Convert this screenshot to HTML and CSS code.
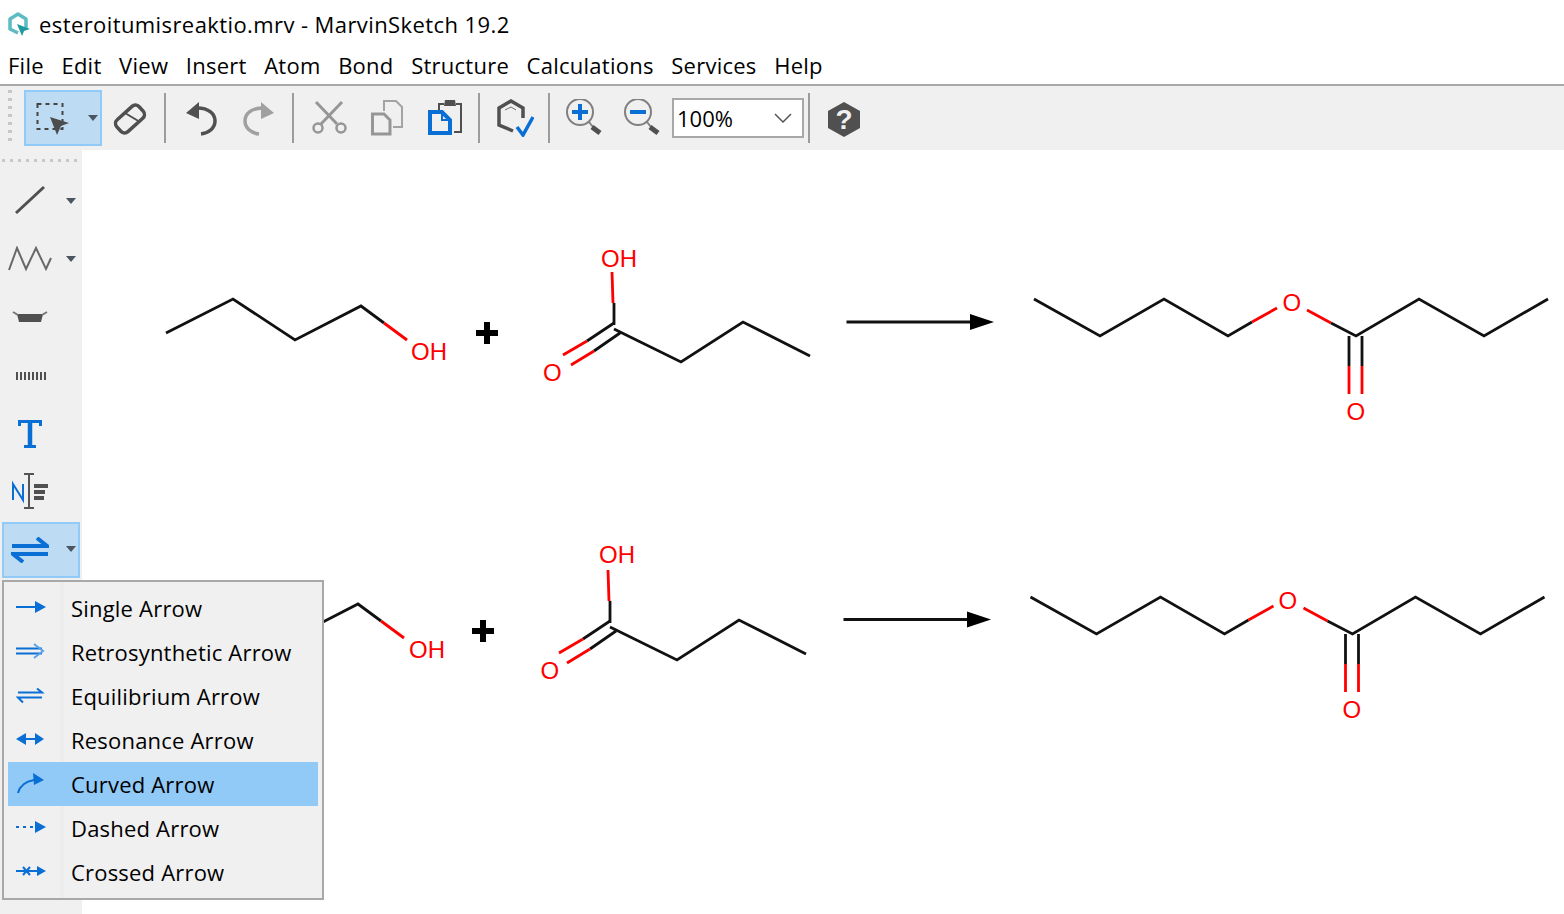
FILE: index.html
```html
<!DOCTYPE html>
<html lang="en">
<head>
<meta charset="utf-8">
<title>MarvinSketch</title>
<link rel="stylesheet" href="styles.css">
</head>
<body>
<div class="app">
  <header class="titlebar">
    <svg class="appicon" width="24" height="24" viewBox="0 0 24 24"><path d="M11 21L3 17V7l8-5 8 5v9" fill="none" stroke="#5dbcc1" stroke-width="3.500" stroke-linejoin="round"/><path d="M10 12l13 5-6 2-2 5z" fill="#1f9aa0"/></svg>
    <span class="titletext">esteroitumisreaktio.mrv - MarvinSketch 19.2</span>
  </header>
  <nav class="menubar">
    <span>File</span><span>Edit</span><span>View</span><span>Insert</span><span>Atom</span><span>Bond</span><span>Structure</span><span>Calculations</span><span>Services</span><span>Help</span>
  </nav>
  <div class="toolbar">
    <div class="grip-v"></div>
    <div class="tool-select">
      <svg width="36" height="38" viewBox="0 0 36 38"><rect x="2.500" y="5" width="25" height="25" fill="none" stroke="#444" stroke-width="2" stroke-dasharray="4 4"/><path d="M15 18l19 6-8 3-4 9z" fill="#4d4d4d"/></svg>
      <i class="caret"></i>
    </div>
    <div class="slot"><svg width="38" height="38" viewBox="0 0 38 38"><rect x="3" y="12" width="30" height="16" rx="5" transform="rotate(-42 18 20)" fill="none" stroke="#505050" stroke-width="3.500"/><path d="M13 14l15 9" stroke="#505050" stroke-width="2"/></svg></div>
    <i class="sep"></i>
    <div class="slot"><svg width="38" height="38" viewBox="0 0 38 38"><path d="M15 9C27 9 33 15 33 22 33 29 27 34 19 35" fill="none" stroke="#505050" stroke-width="3.500"/><path d="M4 14L17 3v17z" fill="#505050"/></svg></div>
    <div class="slot"><svg width="38" height="38" viewBox="0 0 38 38"><path d="M23 9C11 9 5 15 5 22 5 29 11 34 19 35" fill="none" stroke="#a0a0a0" stroke-width="3.500"/><path d="M34 14L21 3v17z" fill="#a0a0a0"/></svg></div>
    <i class="sep"></i>
    <div class="slot"><svg width="38" height="38" viewBox="0 0 38 38"><path d="M6 3l21 22M32 3L11 25" stroke="#969696" stroke-width="3" fill="none"/><circle cx="8" cy="29" r="4.500" fill="none" stroke="#969696" stroke-width="2.500"/><circle cx="31" cy="29" r="4.500" fill="none" stroke="#969696" stroke-width="2.500"/></svg></div>
    <div class="slot"><svg width="38" height="38" viewBox="0 0 38 38"><path d="M16 12V2h12l6 6v20h-9" fill="none" stroke="#a3a3a3" stroke-width="2"/><path d="M4.500 15H16l6 6v14H4.500z" fill="#f0f0f0" stroke="#969696" stroke-width="3"/></svg></div>
    <div class="slot"><svg width="38" height="38" viewBox="0 0 38 38"><path d="M13 12V5h5M30 5h5v28h-7" fill="none" stroke="#505050" stroke-width="2"/><path d="M19 1h10l1 6H18z" fill="#505050"/><path d="M4 13h12l8 8v13H4z" fill="#f0f0f0" stroke="#0a6fd4" stroke-width="4"/><path d="M16 13v8h8" fill="none" stroke="#0a6fd4" stroke-width="2"/></svg></div>
    <i class="sep"></i>
    <div class="slot"><svg width="38" height="38" viewBox="0 0 38 38"><path d="M17 32L3 26V9l12-7 12 7v10" fill="none" stroke="#505050" stroke-width="3.500"/><path d="M9 11l6-3 5 3" fill="none" stroke="#707070"/><path d="M21 28l6 8 10-18" fill="none" stroke="#0a6fd4" stroke-width="3.500"/></svg></div>
    <i class="sep tight"></i>
    <div class="slot"><svg width="38" height="38" viewBox="0 0 38 38"><circle cx="15" cy="13" r="13" fill="none" stroke="#808080" stroke-width="2"/><path d="M15 5v16M7 13h16" stroke="#0a6fd4" stroke-width="4"/><path d="M24 23l4 5" stroke="#808080" stroke-width="2"/><path d="M27 28l8 6" stroke="#505050" stroke-width="5"/></svg></div>
    <div class="slot"><svg width="38" height="38" viewBox="0 0 38 38"><circle cx="15" cy="13" r="13" fill="none" stroke="#808080" stroke-width="2"/><path d="M7 13h16" stroke="#0a6fd4" stroke-width="4"/><path d="M24 23l4 5" stroke="#808080" stroke-width="2"/><path d="M27 28l8 6" stroke="#505050" stroke-width="5"/></svg></div>
    <div class="zoombox"><span>100%</span><svg width="18" height="10" viewBox="0 0 18 10"><path d="M1 1l8 8 8-8" fill="none" stroke="#555" stroke-width="1.500"/></svg></div>
    <i class="sep tight"></i>
    <div class="slot"><svg width="38" height="38" viewBox="0 0 38 38"><path d="M19 3l16 9v17l-16 9-16-9V12z" fill="#505050"/><text x="19" y="30" class="helpq">?</text></svg></div>
  </div>
  <div class="main">
    <aside class="sidebar">
      <div class="grip-h"></div>
      <div class="side-tool"><svg width="32" height="32" viewBox="0 0 32 32"><path d="M2 28L30 2" stroke="#505050" stroke-width="3"/></svg><i class="caret"></i></div>
      <div class="side-tool"><svg width="46" height="26" viewBox="0 0 46 26"><path d="M2 24L10 2l9 21L29 2l10 21 5-11" fill="none" stroke="#686868" stroke-width="2"/></svg><i class="caret"></i></div>
      <div class="side-tool"><svg width="36" height="14" viewBox="0 0 36 14"><path d="M5 4h26l-2 8H7z" fill="#505050"/><path d="M1 2l5 3M35 2l-5 3" stroke="#777" stroke-width="2"/></svg></div>
      <div class="side-tool"><svg width="32" height="10" viewBox="0 0 32 10"><path d="M3 2v8M7 2v8M11 2v8M15 2v8M19 2v8M23 2v8M27 2v8M31 2v8" stroke="#505050" stroke-width="2"/></svg></div>
      <div class="side-tool"><svg width="26" height="30" viewBox="0 0 26 30"><path d="M2.500 8V3.500h21V8M7 28.500h12" fill="none" stroke="#0a6fd4" stroke-width="3"/><path d="M13 3v25" stroke="#0a6fd4" stroke-width="4.500"/></svg></div>
      <div class="side-tool"><svg width="38" height="36" viewBox="0 0 38 36"><path d="M2 27V11l10 16V11" fill="none" stroke="#0a6fd4" stroke-width="2"/><path d="M13 1h10M13 35h10M18 1v34" fill="none" stroke="#555" stroke-width="2"/><path d="M23 13h14M23 19h11M23 25h10" stroke="#505050" stroke-width="4"/></svg></div>
      <div class="side-tool active">
        <svg width="38" height="26" viewBox="0 0 38 26"><path d="M1 9h35L26 1" fill="none" stroke="#0a6fd4" stroke-width="4"/><path d="M37 17H2l10 8" fill="none" stroke="#0a6fd4" stroke-width="4"/></svg><i class="caret"></i>
      </div>
    </aside>
    <section class="canvas">
      <svg class="sketch" viewBox="82 150 1482 764" width="1482" height="764">
        <defs>
          <g id="alcohol">
            <path class="bond" d="M166 333L233 299L295 340L361 306L384 323"/>
            <path class="bond-o" d="M384 323L407 340"/>
          </g>
          <path id="plus" class="plus" d="M487 322v22M476 333h22"/>
          <g id="acid">
            <path class="bond" d="M614 325V303"/>
            <path class="bond-o" d="M613 303L612 272"/>
            <path class="bond" d="M614 323L587 341M620 333L594 351M614 329L681 362L743 322L810 356"/>
            <path class="bond-o" d="M587 341L563 355M594 351L571 365"/>
          </g>
          <g id="arrow">
            <path class="bond" d="M846.500 322H972"/>
            <path class="head" d="M970 314l24 8-24 8z"/>
          </g>
          <g id="ester">
            <path class="bond" d="M1034 299L1100 336L1164 299L1228 336L1252 322"/>
            <path class="bond-o" d="M1252 322L1277 308M1307 310L1331 323"/>
            <path class="bond" d="M1331 323L1356 336L1419 299L1484 336L1548 299M1349 336V366M1362 336V366"/>
            <path class="bond-o" d="M1349 366V394M1362 366V394"/>
          </g>
        </defs>
        <use href="#alcohol"/>
        <use href="#plus"/>
        <use href="#acid"/>
        <use href="#arrow"/>
        <use href="#ester"/>
        <text class="atom" x="411" y="360">OH</text>
        <text class="atom" x="601" y="267">OH</text>
        <text class="atom" x="543" y="381">O</text>
        <text class="atom" x="1282.500" y="311">O</text>
        <text class="atom" x="1346.500" y="420">O</text>
        <use href="#alcohol" x="-3" y="298"/>
        <use href="#plus" x="-4" y="298"/>
        <use href="#acid" x="-4" y="298"/>
        <use href="#arrow" x="-3" y="297.500"/>
        <use href="#ester" x="-3.500" y="298"/>
        <text class="atom" x="409" y="658">OH</text>
        <text class="atom" x="599" y="563">OH</text>
        <text class="atom" x="540.500" y="679">O</text>
        <text class="atom" x="1278.500" y="609">O</text>
        <text class="atom" x="1342.500" y="718">O</text>
      </svg>
    </section>
  </div>
  <div class="popup">
    <ul class="menu">
      <li><svg width="32" height="24" viewBox="0 0 32 24"><path d="M0 12h20" stroke="#0a6fd4" stroke-width="2"/><path d="M19 6l11 6-11 6z" fill="#0a6fd4"/></svg><span>Single Arrow</span></li>
      <li><svg width="32" height="24" viewBox="0 0 32 24"><path d="M0 9.500h26M0 14.500h26" stroke="#0a6fd4" stroke-width="2"/><path d="M18 5l9 7-9 7" fill="none" stroke="#5aa3e8" stroke-width="2"/></svg><span>Retrosynthetic Arrow</span></li>
      <li><svg width="32" height="24" viewBox="0 0 32 24"><path d="M2 9.500h24l-5-4" fill="none" stroke="#0a6fd4" stroke-width="2"/><path d="M26 14.500H2l5 5" fill="none" stroke="#0a6fd4" stroke-width="2"/></svg><span>Equilibrium Arrow</span></li>
      <li><svg width="32" height="24" viewBox="0 0 32 24"><path d="M8 12h14" stroke="#0a6fd4" stroke-width="2"/><path d="M10 6L0 12l10 6zM19 6l9 6-9 6z" fill="#0a6fd4"/></svg><span>Resonance Arrow</span></li>
      <li class="current"><svg width="32" height="24" viewBox="0 0 32 24"><path d="M2 22Q5 11 18 9" fill="none" stroke="#0a6fd4" stroke-width="2"/><path d="M17 2l11 7-10 5z" fill="#0a6fd4"/></svg><span>Curved Arrow</span></li>
      <li><svg width="32" height="24" viewBox="0 0 32 24"><path d="M0 12h20" stroke="#0a6fd4" stroke-width="2" stroke-dasharray="3 4"/><path d="M19 6l11 6-11 6z" fill="#0a6fd4"/></svg><span>Dashed Arrow</span></li>
      <li><svg width="32" height="24" viewBox="0 0 32 24"><path d="M0 12h22M7 8l7 8M14 8l-7 8" stroke="#0a6fd4" stroke-width="2"/><path d="M21 7l9 5-9 5z" fill="#0a6fd4"/></svg><span>Crossed Arrow</span></li>
    </ul>
  </div>
</div>
</body>
</html>
```

FILE: styles.css
```css
* { box-sizing: border-box; }
html, body { margin: 0; padding: 0; background: #fff; overflow: hidden; }
body { font-family: "Open Sans", "Noto Sans", sans-serif; color: #000; }
.app { position: relative; width: 1564px; height: 914px; display: flex; flex-direction: column; }

.titlebar { height: 46px; display: flex; align-items: center; gap: 8px; padding: 2px 0 0 7px; flex: none; }
.appicon { flex: none; display: block; }
.titletext { font-size: 22px; line-height: 1; white-space: nowrap; color: #000; letter-spacing: .41px; }

.menubar { height: 38px; display: flex; align-items: center; gap: 17.600px; padding: 0 0 0 8px; font-size: 22px; letter-spacing: .25px; color: #000; flex: none; }

.toolbar { height: 66px; flex: none; border-top: 2px solid #a8a8a8; background: #f0f0f0; display: flex; align-items: center; padding-left: 8px; }
.slot { width: 58px; flex: none; display: flex; justify-content: center; }
.slot svg { display: block; }
.grip-v { width: 4px; height: 56px; margin-right: 12px; background: repeating-linear-gradient(to bottom, #c8c8c8 0 3px, transparent 3px 8px); flex: none; }
.tool-select { width: 78px; height: 56px; background: #bddcf3; border: 2px solid #91c9f7; display: flex; align-items: center; padding-left: 9px; flex: none; position: relative; }
.tool-select svg { display: block; flex: none; }
.tool-select .caret { position: absolute; right: 2px; top: 23px; }
.caret { display: block; width: 0; height: 0; border-left: 5px solid transparent; border-right: 5px solid transparent; border-top: 6px solid #4a5560; }
.sep { display: block; width: 2px; height: 50px; background: #9c9c9c; flex: none; margin: 0 6px 0 4px; }
.sep.tight { margin-right: 5px; }
.zoombox { width: 132px; height: 40px; background: #fff; border: 2px solid #a8a8a8; display: flex; align-items: center; justify-content: space-between; padding: 0 10px 0 3px; font-size: 22px; flex: none; margin-left: 1px; }
.zoombox svg { display: block; }
.helpq { font-family: "Liberation Sans", sans-serif; font-weight: 700; font-size: 28px; fill: #f0f0f0; text-anchor: middle; }

.main { flex: 1; display: flex; min-height: 0; }
.sidebar { width: 82px; background: #f0f0f0; flex: none; display: flex; flex-direction: column; }
.grip-h { height: 3px; margin: 9px 2px 10px; background: repeating-linear-gradient(to right, #c8c8c8 0 3px, transparent 3px 8px); flex: none; }
.side-tool { height: 58px; width: 78px; margin-left: 2px; display: grid; grid-template-columns: 56px; place-items: center; position: relative; flex: none; }
.side-tool svg { display: block; }
.side-tool .caret { position: absolute; right: 4px; top: 26px; }
.side-tool.active { background: #bddcf3; border: 2px solid #91c9f7; height: 56px; margin-top: 2px; grid-template-columns: 52px; }
.side-tool.active .caret { top: 22px; right: 2px; }
.canvas { flex: 1; min-width: 0; background: #fff; }
.sketch { display: block; }
.bond, .bond-o, .plus { fill: none; stroke-width: 2.800; }
.bond { stroke: #111; }
.bond-o { stroke: #f00; }
.plus { stroke: #000; stroke-width: 6; }
.head { fill: #000; }
.atom { fill: #f00; font-family: "Liberation Sans", sans-serif; font-size: 24px; }

.popup { position: absolute; left: 2px; top: 580px; width: 322px; height: 320px; border: 2px solid #a8a8a8; background: linear-gradient(to right, #f0f0f0 0 56px, #ededed 56px 60px, #f0f0f0 60px); padding: 4px; }
.menu { list-style: none; margin: 0; padding: 0; }
.menu li { height: 44px; display: flex; align-items: center; padding-left: 8px; font-size: 22px; letter-spacing: .2px; color: #000; white-space: nowrap; gap: 22px; }
.menu li svg { flex: none; width: 32px; display: block; margin-top: -2px; }
.menu li span { display: block; margin-left: 1px; }
.menu li.current { background: #91c9f7; }
```
